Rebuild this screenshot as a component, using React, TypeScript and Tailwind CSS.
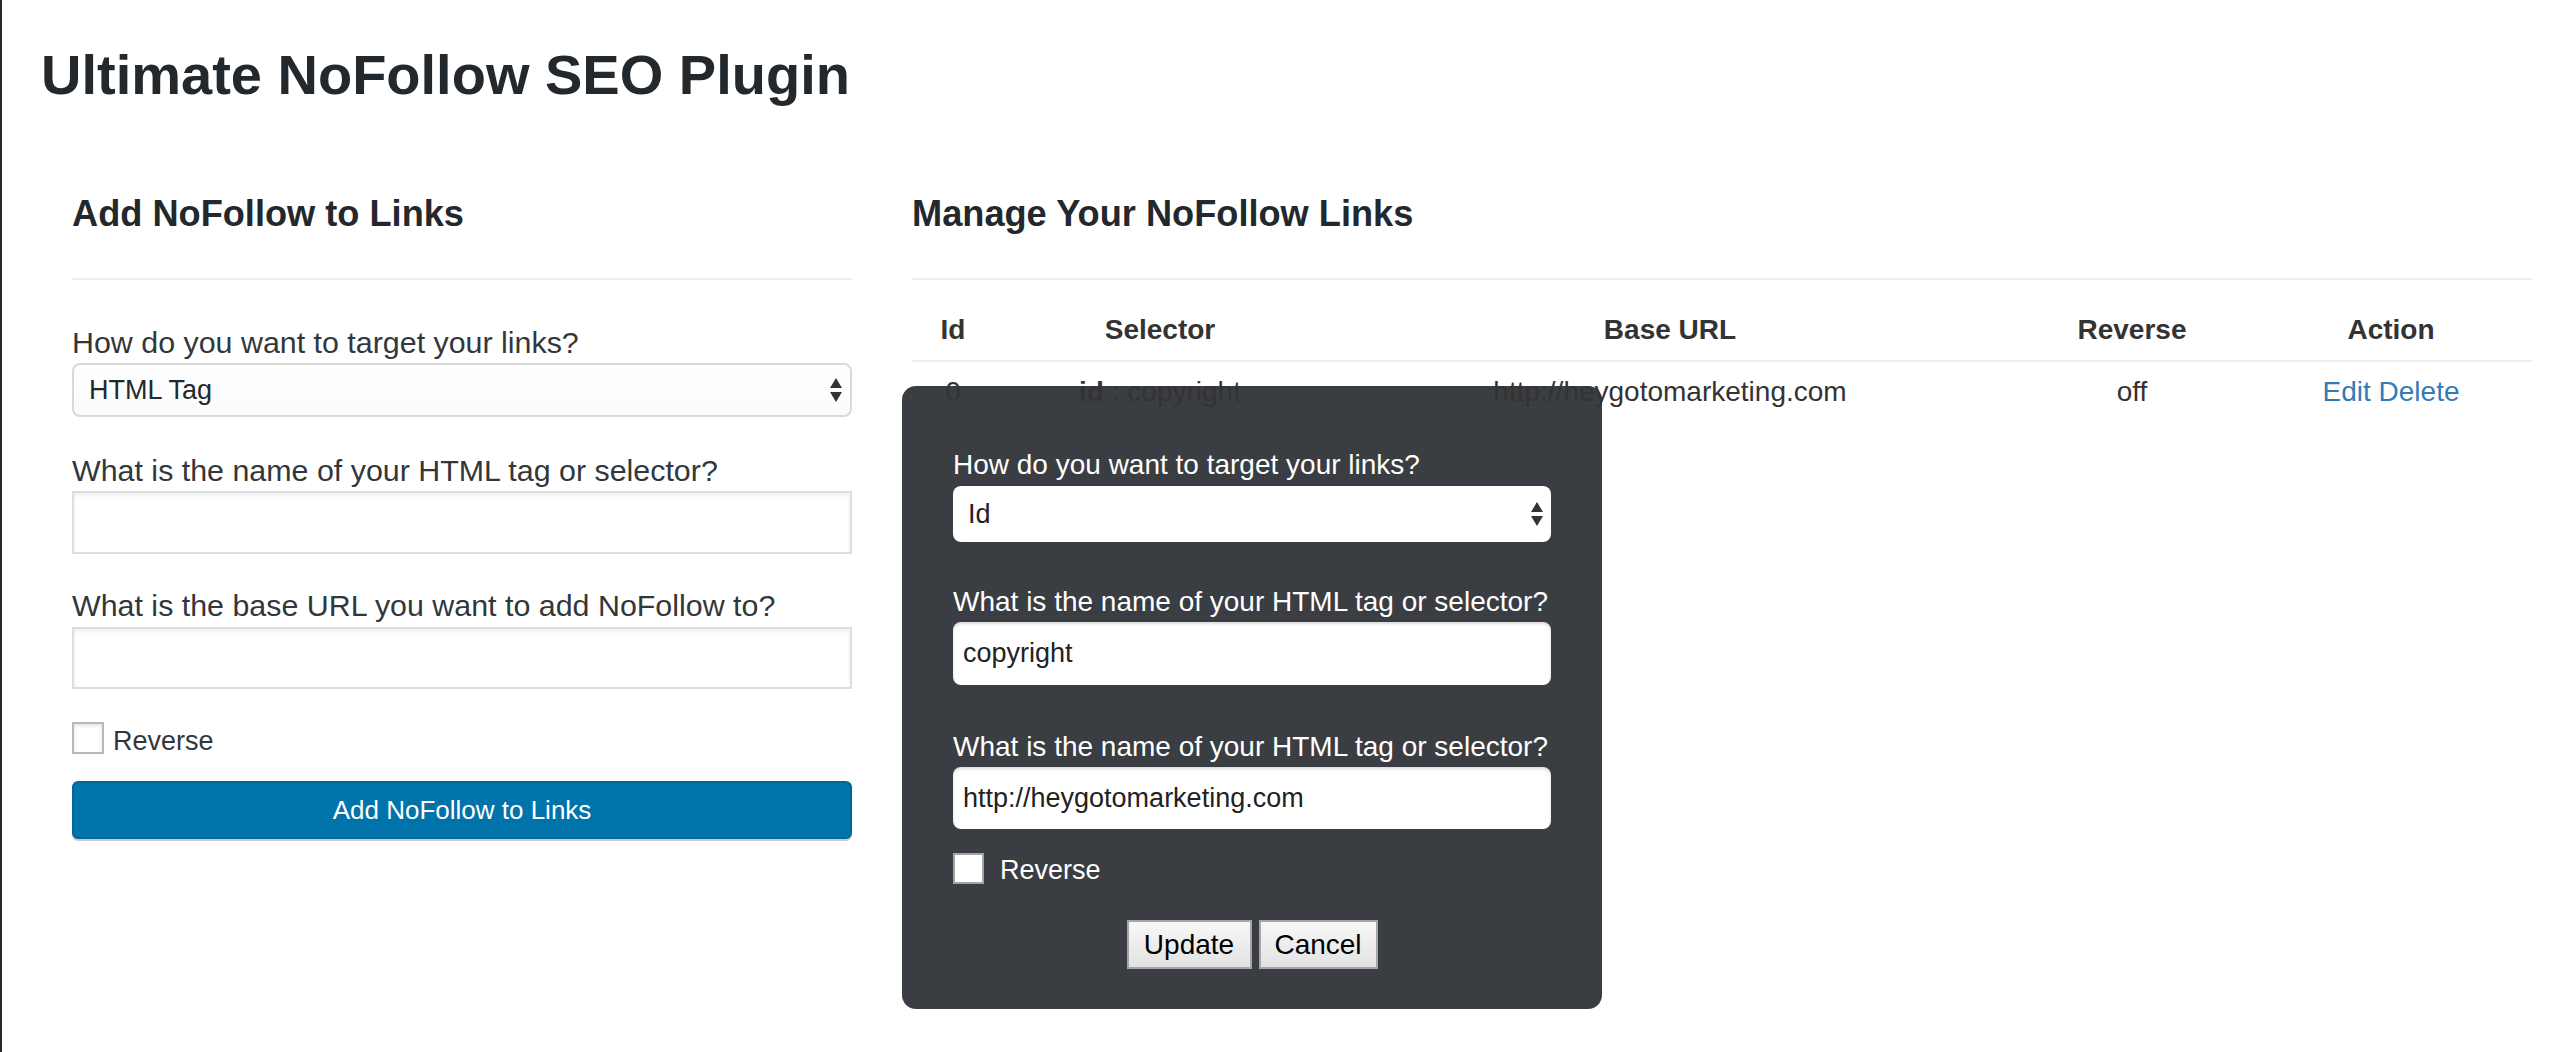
import React from "react";

function SelectArrows() {
  return (
    <svg width="12" height="26" viewBox="0 0 12 26" className="shrink-0">
      <polygon points="6,1 12,11 0,11" fill="#333333" />
      <polygon points="0,15 12,15 6,25" fill="#333333" />
    </svg>
  );
}

const cols = "grid grid-cols-[82px_332px_688px_236px_282px]";

export default function App() {
  return (
    <div className="relative h-[1052px] w-[2560px] overflow-hidden bg-white border-l-2 border-[#23282d] font-['Liberation_Sans',Arial,sans-serif] text-[#333333]">
      {/* Title */}
      <div className="pt-[43px] pl-[39px]">
        <h1 className="text-[56px] leading-[64px] font-bold text-[#23282d]">Ultimate NoFollow SEO Plugin</h1>
      </div>

      <div className="flex pl-[70px] gap-[60px]">
        {/* Left column */}
        <div className="w-[780px] flex flex-col">
          <h2 className="mt-[85px] text-[36.2px] leading-[44px] font-bold text-[#23282d]">Add NoFollow to Links</h2>
          <div className="mt-[42px] h-[2px] bg-[#eeeeee]" />

          <label className="mt-[44px] text-[30.4px] leading-[36px] whitespace-nowrap text-[#32373c]">How do you want to target your links?</label>
          <div className="mt-[3px] h-[54px] shrink-0 rounded-[8px] border-2 border-[#d9d9d9] bg-gradient-to-b from-white to-[#fbfbfb] flex items-center justify-between pl-[15px] pr-[8px]">
            <span className="text-[27px] text-[#23282d]">HTML Tag</span>
            <SelectArrows />
          </div>

          <label className="mt-[35px] text-[30.4px] leading-[36px] whitespace-nowrap text-[#32373c]">What is the name of your HTML tag or selector?</label>
          <div className="mt-[3px] h-[63px] shrink-0 border-2 border-[#dddddd] bg-white shadow-[inset_0_2px_4px_rgba(0,0,0,0.07)]" />

          <label className="mt-[33px] text-[30.4px] leading-[36px] whitespace-nowrap text-[#32373c]">What is the base URL you want to add NoFollow to?</label>
          <div className="mt-[4px] h-[62px] shrink-0 border-2 border-[#dddddd] bg-white shadow-[inset_0_2px_4px_rgba(0,0,0,0.07)]" />

          <div className="mt-[33px] h-[32px] shrink-0 flex items-start gap-[9px]">
            <div className="w-[32px] h-[32px] border-2 border-[#b4b9be] bg-white shadow-[inset_0_2px_4px_rgba(0,0,0,0.1)]" />
            <span className="mt-[3px] text-[27px] leading-[32px] text-[#32373c]">Reverse</span>
          </div>

          <div className="mt-[27px] h-[58px] shrink-0 rounded-[6px] border-2 border-[#006799] bg-[#0073aa] shadow-[0_2px_0_#cccccc] flex items-center justify-center">
            <span className="text-[26px] text-white">Add NoFollow to Links</span>
          </div>
        </div>

        {/* Right column */}
        <div className="w-[1620px] flex flex-col">
          <h2 className="mt-[85px] text-[36.2px] leading-[44px] font-bold text-[#23282d]">Manage Your NoFollow Links</h2>
          <div className="mt-[42px] h-[2px] bg-[#eeeeee]" />

          <div className={`${cols} border-b-2 border-[#eeeeee] text-[28px] leading-[40px] font-bold text-center text-[#333333]`}>
            <div className="pt-[30px] pb-[10px]">Id</div>
            <div className="pt-[30px] pb-[10px]">Selector</div>
            <div className="pt-[30px] pb-[10px]">Base URL</div>
            <div className="pt-[30px] pb-[10px]">Reverse</div>
            <div className="pt-[30px] pb-[10px]">Action</div>
          </div>
          <div className={`${cols} text-[28px] leading-[40px] text-center text-[#333333]`}>
            <div className="relative z-10 pt-[10px]">0</div>
            <div className="relative z-10 pt-[10px]"><b>id</b> : copyright</div>
            <div className="relative z-10 pt-[10px]">http://heygotomarketing.com</div>
            <div className="relative z-10 pt-[10px]">off</div>
            <div className="relative z-10 pt-[10px] text-[#337ab7]">Edit Delete</div>
          </div>
        </div>
      </div>

      {/* Edit dialog */}
      <div className="absolute z-0 left-[900px] top-[386px] w-[700px] h-[623px] rounded-[14px] bg-[#3a3d42] flex flex-col px-[51px]">
        <label className="mt-[62px] text-[28px] leading-[34px] whitespace-nowrap text-white">How do you want to target your links?</label>
        <div className="mt-[4px] h-[56px] shrink-0 rounded-[8px] bg-white flex items-center justify-between pl-[15px] pr-[8px]">
          <span className="text-[27px] text-[#222222]">Id</span>
          <SelectArrows />
        </div>

        <label className="mt-[43px] text-[28px] leading-[34px] whitespace-nowrap text-white">What is the name of your HTML tag or selector?</label>
        <div className="mt-[3px] h-[63px] shrink-0 rounded-[8px] bg-white shadow-[inset_0_2px_3px_rgba(0,0,0,0.15)] flex items-center pl-[10px]">
          <span className="text-[27px] text-[#222222]">copyright</span>
        </div>

        <label className="mt-[45px] text-[28px] leading-[34px] whitespace-nowrap text-white">What is the name of your HTML tag or selector?</label>
        <div className="mt-[3px] h-[62px] shrink-0 rounded-[8px] bg-white shadow-[inset_0_2px_3px_rgba(0,0,0,0.15)] flex items-center pl-[10px]">
          <span className="text-[27px] text-[#222222]">http://heygotomarketing.com</span>
        </div>

        <div className="mt-[24px] h-[31px] shrink-0 flex items-start gap-[16px]">
          <div className="w-[31px] h-[31px] border-2 border-[#a3a3a3] bg-white" />
          <span className="mt-[2px] text-[27px] leading-[31px] text-white">Reverse</span>
        </div>

        <div className="mt-[36px] shrink-0 flex justify-center gap-[7px]">
          <div className="w-[125px] h-[49px] border-2 border-[#a6a6a6] bg-gradient-to-b from-[#f8f8f8] to-[#e2e2e2] flex items-center justify-center text-[28px] text-black">Update</div>
          <div className="w-[119px] h-[49px] border-2 border-[#a6a6a6] bg-gradient-to-b from-[#f8f8f8] to-[#e2e2e2] flex items-center justify-center text-[28px] text-black">Cancel</div>
        </div>
      </div>
    </div>
  );
}
